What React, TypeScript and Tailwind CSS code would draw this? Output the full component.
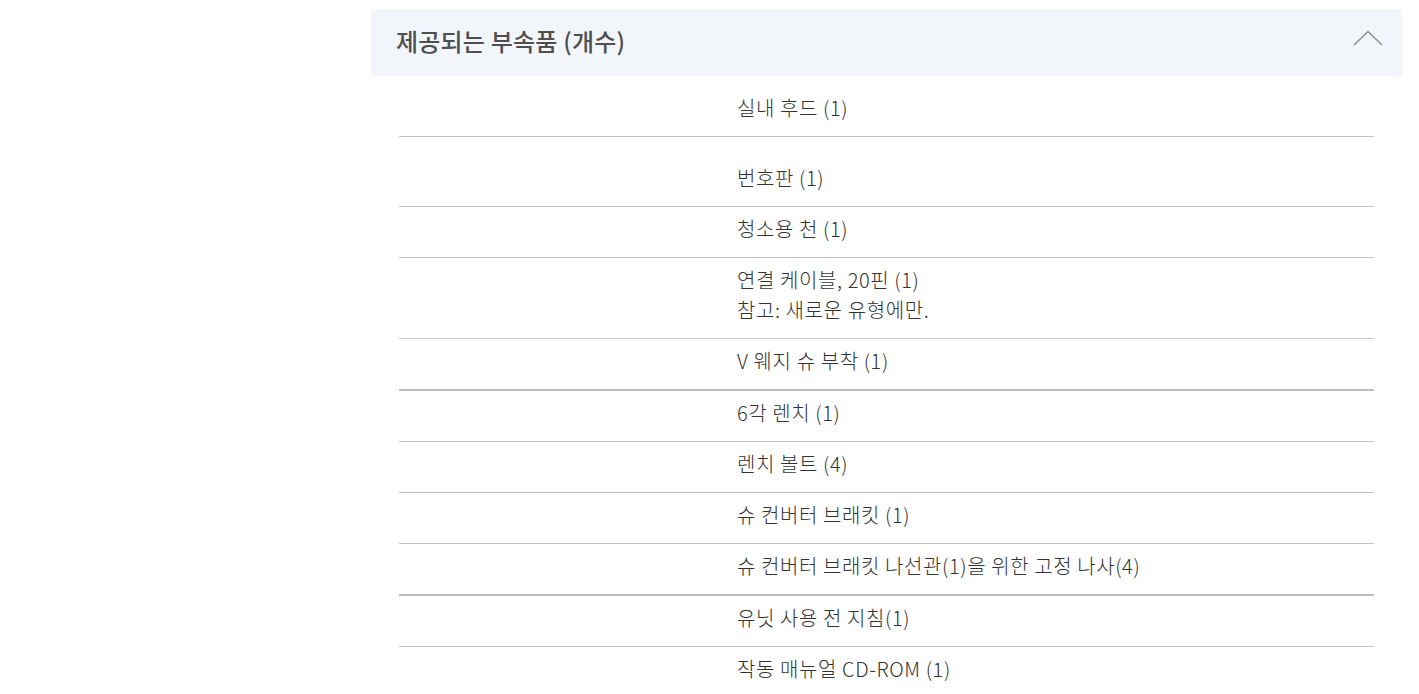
import React from 'react';

interface Item {
  lines: string[];
  thick?: boolean;
  extraTop?: boolean;
}

const ITEMS: Item[] = [
  { lines: ['실내 후드 (1)'] },
  { lines: ['번호판 (1)'], extraTop: true },
  { lines: ['청소용 천 (1)'] },
  { lines: ['연결 케이블, 20핀 (1)', '참고: 새로운 유형에만.'] },
  { lines: ['V 웨지 슈 부착 (1)'], thick: true },
  { lines: ['6각 렌치 (1)'] },
  { lines: ['렌치 볼트 (4)'] },
  { lines: ['슈 컨버터 브래킷 (1)'] },
  { lines: ['슈 컨버터 브래킷 나선관(1)을 위한 고정 나사(4)'], thick: true },
  { lines: ['유닛 사용 전 지침(1)'] },
  { lines: ['작동 매뉴얼 CD-ROM (1)'] },
];

const ChevronUp: React.FC = () => (
  <svg width="30" height="16" viewBox="0 0 30 16" fill="none" className="text-[#8b929b] mb-[10px]">
    <path d="M1 15 L15 1.5 L29 15" stroke="currentColor" strokeWidth="1.6" />
  </svg>
);

const App: React.FC = () => {
  return (
    <div className="w-[1419px] h-[694px] overflow-hidden bg-white font-['Noto_Sans_CJK_KR','Noto_Sans',sans-serif]">
      <div className="ml-[371px] w-[1031px] pt-[9px]">
        <div className="flex items-center justify-between h-[67px] bg-[#f2f5fa] pl-[25px] pr-[19px]">
          <h2 className="text-[24px] font-medium text-[#4f4f4f] tracking-[0.2px] -mt-[4px]">제공되는 부속품 (개수)</h2>
          <ChevronUp />
        </div>
        <div className="mx-[28px] mt-[10px]">
          {ITEMS.map((item, i) => (
            <div
              key={i}
              className={`flex text-[20px] font-light text-[#333] leading-[30px] tracking-[0.6px] ${item.extraTop ? 'pt-[26px]' : 'pt-[7px]'} pb-[13px] ${i === ITEMS.length - 1 ? '' : item.thick ? 'border-b-2 border-[#bdbdbd]' : 'border-b border-[#c4c4c4]'}`}
            >
              <div className="w-[338px] shrink-0" />
              <div className="flex flex-col">
                {item.lines.map((l, j) => (
                  <span key={j}>{l}</span>
                ))}
              </div>
            </div>
          ))}
        </div>
      </div>
    </div>
  );
};

export default App;
